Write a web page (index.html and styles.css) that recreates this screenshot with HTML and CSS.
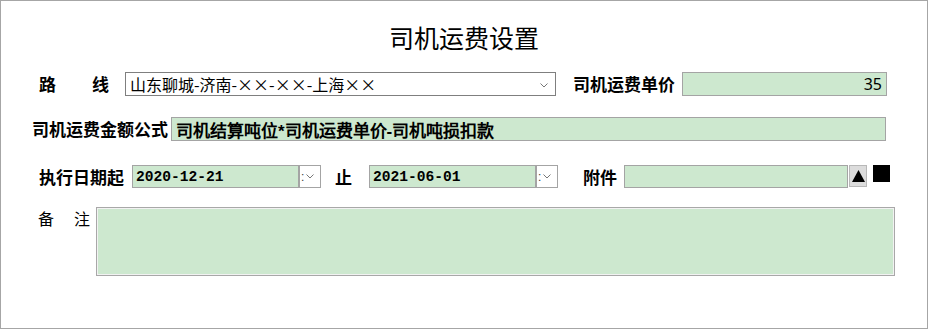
FILE: index.html
```html
<!DOCTYPE html>
<html lang="zh-CN">
<head>
    <meta charset="UTF-8">
    <title>司机运费设置</title>
    <link rel="stylesheet" href="styles.css">
</head>
<body>
    <div class="panel">
        <h1 class="title">司机运费设置</h1>

        <div class="row row-route">
            <label class="label label-split"><span>路</span><span>线</span></label>
            <div class="select">
                <span class="select-text">山东聊城-济南-××-××-上海××</span>
                <svg class="chevron" width="8" height="5" viewBox="0 0 8 5"><path d="M0.5 0.5 L4 4 L7.5 0.5" fill="none" stroke="#777" stroke-width="1"/></svg>
            </div>
            <label class="label label-price">司机运费单价</label>
            <input class="field field-price" type="text" value="35" readonly>
        </div>

        <div class="row row-formula">
            <label class="label label-formula">司机运费金额公式</label>
            <input class="field field-formula" type="text" value="司机结算吨位*司机运费单价-司机吨损扣款" readonly>
        </div>

        <div class="row row-date">
            <label class="label label-from">执行日期起</label>
            <input class="field field-date" type="text" value="2020-12-21" readonly>
            <div class="spin">
                <span class="spin-dot">:</span>
                <svg width="8" height="5" viewBox="0 0 8 5"><path d="M0.5 0.5 L4 4 L7.5 0.5" fill="none" stroke="#777" stroke-width="1"/></svg>
            </div>
            <label class="label label-to">止</label>
            <input class="field field-date" type="text" value="2021-06-01" readonly>
            <div class="spin">
                <span class="spin-dot">:</span>
                <svg width="8" height="5" viewBox="0 0 8 5"><path d="M0.5 0.5 L4 4 L7.5 0.5" fill="none" stroke="#777" stroke-width="1"/></svg>
            </div>
            <label class="label label-attach">附件</label>
            <input class="field field-attach" type="text" value="" readonly>
            <div class="up-btn">
                <svg width="13" height="12" viewBox="0 0 13 12"><path d="M6.5 0 L13 12 L0 12 Z" fill="#000"/></svg>
            </div>
            <div class="stop-box"></div>
        </div>

        <div class="row row-note">
            <label class="label label-split label-note"><span>备</span><span>注</span></label>
            <textarea class="field note" readonly></textarea>
        </div>
    </div>
</body>
</html>
```

FILE: styles.css
```css
/* 重置默认样式 */
* {
    margin: 0;
    padding: 0;
    box-sizing: border-box;
}

body {
    background: #fff;
    font-family: "Noto Sans CJK SC", "Noto Sans", sans-serif;
    color: #000;
}

.panel {
    width: 928px;
    height: 329px;
    border: 1px solid #a6a6a6;
}

.title {
    margin-top: 21px;
    text-align: center;
    font-size: 25px;
    font-weight: 400;
    line-height: 30px;
}

.row {
    display: flex;
    align-items: center;
}

.label {
    font-size: 17px;
    font-weight: 700;
    line-height: 24px;
    white-space: nowrap;
    flex-shrink: 0;
}

.label-split {
    display: flex;
    justify-content: space-between;
}

.field {
    flex-shrink: 0;
    height: 24px;
    border: 1px solid #a4a4a4;
    background: #cde8cf;
    outline: none;
    color: #000;
}

/* 路线 */
.row-route {
    margin-top: 20px;
    padding-left: 38px;
}

.row-route .label-split {
    width: 70px;
    margin-right: 16px;
}

.select {
    flex-shrink: 0;
    width: 431px;
    height: 24px;
    border: 1px solid #7f7f7f;
    display: flex;
    align-items: center;
    justify-content: space-between;
    padding: 0 7px 0 4px;
}

.select-text {
    font-size: 16px;
    line-height: 22px;
}

.chevron {
    margin-top: 3px;
}

.label-price {
    margin-left: 17px;
    width: 102px;
}

.field-price {
    margin-left: 7px;
    width: 205px;
    text-align: right;
    padding-right: 4px;
    font-family: "Noto Sans", sans-serif;
    font-size: 16px;
}

/* 公式 */
.row-formula {
    margin-top: 21px;
    padding-left: 31px;
}

.label-formula {
    width: 136px;
}

.field-formula {
    margin-left: 3px;
    width: 715px;
    padding-left: 4px;
    font-size: 17px;
    font-weight: 700;
}

/* 日期 */
.row-date {
    margin-top: 24px;
    padding-left: 38px;
    align-items: flex-start;
}

.label-from {
    width: 85px;
    margin-right: 8px;
    line-height: 23px;
}

.field-date {
    width: 167px;
    height: 23px;
    padding-left: 3px;
    font-family: "Liberation Mono", monospace;
    font-size: 14.6px;
    font-weight: 700;
}

.spin {
    flex-shrink: 0;
    width: 22px;
    height: 23px;
    border: 1px solid #a4a4a4;
    background: #fff;
    display: flex;
    align-items: center;
    gap: 2px;
    padding-left: 1px;
}

.spin-dot {
    font-family: "Liberation Sans", sans-serif;
    font-size: 12px;
    line-height: 12px;
    color: #444;
}

.label-to {
    margin-left: 14px;
    width: 34px;
    line-height: 23px;
}

.label-attach {
    margin-left: 25px;
    width: 41px;
    line-height: 23px;
}

.field-attach {
    width: 224px;
    height: 23px;
}

.up-btn {
    flex-shrink: 0;
    width: 18px;
    height: 22px;
    margin-left: 1px;
    background: #dcdcdc;
    border: 1px solid #b8b8b8;
    display: flex;
    align-items: center;
    justify-content: center;
}

.stop-box {
    flex-shrink: 0;
    width: 17px;
    height: 17px;
    margin-left: 6px;
    background: #000;
}

/* 备注 */
.row-note {
    margin-top: 19px;
    padding-left: 37px;
    align-items: flex-start;
}

.label-note {
    width: 52px;
    margin-right: 6px;
    font-weight: 400;
    font-size: 16px;
    line-height: 20px;
    margin-top: 1px;
}

.note {
    width: 799px;
    height: 69px;
    resize: none;
    border-color: #a8a8a8;
    box-shadow: inset 0 0 0 1px #f2f2f2;
}
```
